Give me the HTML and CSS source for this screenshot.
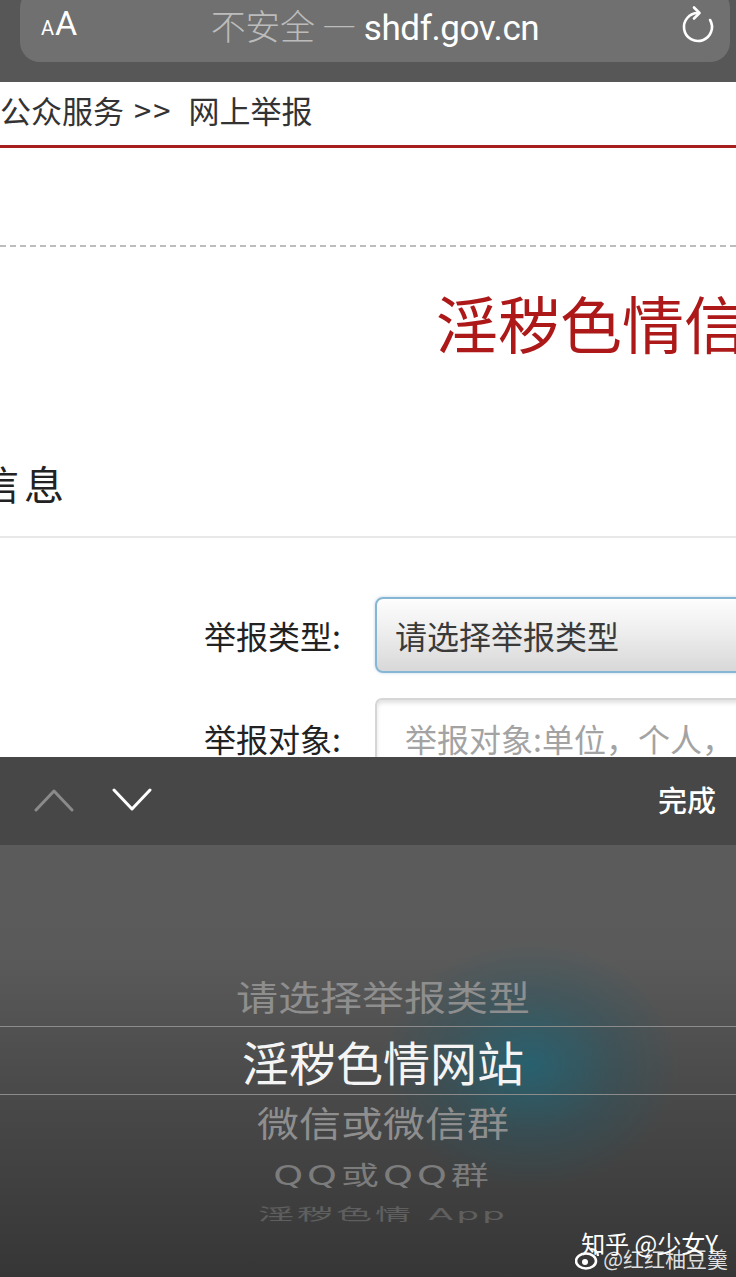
FILE: index.html
```html
<!DOCTYPE html>
<html lang="zh-CN">
<head>
    <meta charset="UTF-8">
    <meta name="viewport" content="width=device-width, initial-scale=1.0">
    <title>网上举报</title>
    <link rel="stylesheet" href="styles.css">
</head>
<body>
    <div class="toolbar">
        <div class="urlbar">
            <span class="aa"><span class="aa-small">A</span>A</span>
            <span class="url"><span class="insecure">不安全 — </span>shdf.gov.cn</span>
            <svg class="reload" width="36" height="40" viewBox="0 0 36 40">
                <path d="M18 8 A14 14 0 1 0 30.1 15" fill="none" stroke="#fff" stroke-width="2.6" stroke-linecap="round"/>
                <path d="M14 2.5 L19.5 8 L14 13.5" fill="none" stroke="#fff" stroke-width="2.6" stroke-linecap="round" stroke-linejoin="round"/>
            </svg>
        </div>
    </div>

    <div class="page">
        <div class="crumb">公众服务<span class="sep">&gt;&gt;</span>网上举报</div>
        <div class="dashed"></div>
        <div class="title">淫秽色情信息举报</div>
        <div class="section">信息</div>

        <div class="form">
            <div class="row">
                <label class="label">举报类型:</label>
                <div class="select">请选择举报类型</div>
            </div>
            <div class="row">
                <label class="label">举报对象:</label>
                <div class="input"><span class="placeholder">举报对象:单位，个人，网站等</span></div>
            </div>
        </div>
    </div>

    <div class="keyboard">
        <div class="accessory">
            <div class="arrows">
                <svg width="40" height="26" viewBox="0 0 40 26">
                    <path d="M2 23 L20 4 L38 23" fill="none" stroke="#8a8a8a" stroke-width="3" stroke-linecap="round" stroke-linejoin="round"/>
                </svg>
                <svg width="40" height="26" viewBox="0 0 40 26">
                    <path d="M2 3 L20 22 L38 3" fill="none" stroke="#fff" stroke-width="3" stroke-linecap="round" stroke-linejoin="round"/>
                </svg>
            </div>
            <span class="done">完成</span>
        </div>

        <div class="picker">
            <div class="glow"></div>
            <div class="item item-far">请选择举报类型</div>
            <div class="item item-selected">淫秽色情网站</div>
            <div class="item item-near">微信或微信群</div>
            <div class="item item-qq">QQ或QQ群</div>
            <div class="item item-last">淫秽色情 App</div>
        </div>

        <div class="watermark">
            <div class="wm-zhihu">知乎 @少女Y</div>
            <div class="wm-weibo">
                <svg width="26" height="24" viewBox="0 0 26 24">
                    <ellipse cx="11" cy="15" rx="10" ry="7.5" fill="none" stroke="#fff" stroke-width="2.6"/>
                    <circle cx="10" cy="16" r="3" fill="#fff"/>
                    <path d="M16 3 A7 7 0 0 1 23 10" fill="none" stroke="#fff" stroke-width="2.2"/>
                </svg>
                <span>@红红柚豆羹</span>
            </div>
        </div>
    </div>
</body>
</html>
```

FILE: styles.css
```css
body { margin: 0; width: 736px; height: 1277px; overflow: hidden; background: #fff; font-family: "Noto Sans CJK SC", "Noto Sans", sans-serif; }

/* browser bar */
.toolbar { height: 82px; background: #575757; overflow: hidden; }
.urlbar { position: relative; display: flex; align-items: center; justify-content: center; height: 74px; margin: -12px 6px 0 20px; box-sizing: border-box; background: #6f706f; border-radius: 20px; }
.aa { position: absolute; left: 21px; top: 18px; color: #fff; font-family: Roboto, "Liberation Sans", sans-serif; font-size: 34px; line-height: 34px; }
.aa-small { font-size: 20px; margin-right: 1px; }
.url { font-family: Roboto, "Noto Sans CJK SC", sans-serif; font-size: 35px; color: #fff; line-height: 1; margin-top: 2px; letter-spacing: -0.4px; }
.insecure { color: #bcbcbc; font-family: "Noto Sans CJK SC", sans-serif; font-weight: 300; }
.reload { position: absolute; right: 14px; top: 17px; }

/* page */
.page { height: 675px; overflow: hidden; color: #333; }
.crumb { font-size: 31px; line-height: 43px; padding: 6px 0 14px 0; border-bottom: 3px solid #a81e1e; white-space: nowrap; }
.sep { margin: 0 16px 0 10px; letter-spacing: 2px; }
.dashed { height: 2px; margin-top: 97px; background: repeating-linear-gradient(90deg, #bdbdbd 0 6px, transparent 6px 10px); }
.title { margin-top: 38px; padding-left: 436px; font-size: 62px; line-height: 74px; color: #ad1818; white-space: nowrap; }
.section { margin: 94px 0 0 -21px; font-size: 40px; line-height: 60px; color: #222; letter-spacing: 5px; padding-bottom: 23px; border-bottom: 2px solid #e8e8e8; white-space: nowrap; }

.form { padding-top: 59px; }
.row { display: flex; align-items: center; margin-bottom: 25px; }
.label { width: 341px; flex: none; text-align: right; font-size: 32px; color: #222; margin-right: 34px; }
.select { flex: none; width: 500px; height: 76px; box-sizing: border-box; display: flex; align-items: center; padding-left: 18px; font-size: 32px; color: #3a3a3a; border: 2px solid #86b6d3; border-radius: 8px; background: linear-gradient(#fdfdfd, #f0f0f0 40%, #d8d8d8); box-shadow: 0 0 3px rgba(120, 170, 200, 0.5); }
.input { flex: none; width: 500px; height: 80px; box-sizing: border-box; display: flex; align-items: center; padding-left: 28px; border: 2px solid #d6d6d6; border-radius: 7px; box-shadow: inset 0 3px 4px rgba(0, 0, 0, 0.12); white-space: nowrap; overflow: hidden; }
.placeholder { font-size: 32px; color: #a3a3a3; }

/* keyboard */
.keyboard { position: relative; height: 520px; background: linear-gradient(#5c5c5c 0, #5a5a5a 200px, #4a4a4a 330px, #363636 520px); overflow: hidden; }
.accessory { display: flex; justify-content: space-between; align-items: center; height: 88px; padding: 0 20px 0 34px; background: #474747; }
.arrows { display: flex; gap: 38px; margin-top: -2px; }
.done { color: #fff; font-size: 29px; font-weight: 500; margin-top: -4px; }

.picker { position: relative; padding: 121px 0 0 30px; text-align: center; }
.glow { position: absolute; left: 380px; top: 95px; width: 300px; height: 250px; background: radial-gradient(ellipse at center, rgba(25, 105, 125, 0.7) 0, rgba(30, 90, 105, 0.32) 40%, rgba(80, 90, 95, 0) 70%); }
.item { position: relative; white-space: nowrap; }
.item-far { height: 60px; line-height: 60px; font-size: 42px; color: #8e8e8e; transform: scaleY(0.84); }
.item-selected { height: 67px; line-height: 67px; font-size: 47px; color: #f4f4f4; border-top: 1px solid #8c8c8c; border-bottom: 1px solid #8c8c8c; margin-left: -30px; padding-left: 30px; }
.item-near { height: 54px; line-height: 54px; font-size: 42px; color: #8e8e8e; transform: scaleY(0.84); }
.item-qq { height: 54px; line-height: 54px; font-size: 38px; color: #7c7c7c; letter-spacing: 4px; transform: scaleY(0.7); font-family: "DejaVu Sans", "Noto Sans CJK SC", sans-serif; }
.item-last { height: 30px; line-height: 30px; margin-top: -3px; font-size: 36px; color: #5f5f5f; letter-spacing: 3px; transform: scaleY(0.45); font-family: "DejaVu Sans", "Noto Sans CJK SC", sans-serif; }

.watermark { position: absolute; right: 8px; bottom: 6px; color: #fff; }
.wm-zhihu { font-size: 24px; line-height: 28px; margin-left: 6px; }
.wm-weibo { display: flex; align-items: center; gap: 2px; margin-top: -12px; font-size: 21px; line-height: 26px; color: rgba(255, 255, 255, 0.85); }
```
